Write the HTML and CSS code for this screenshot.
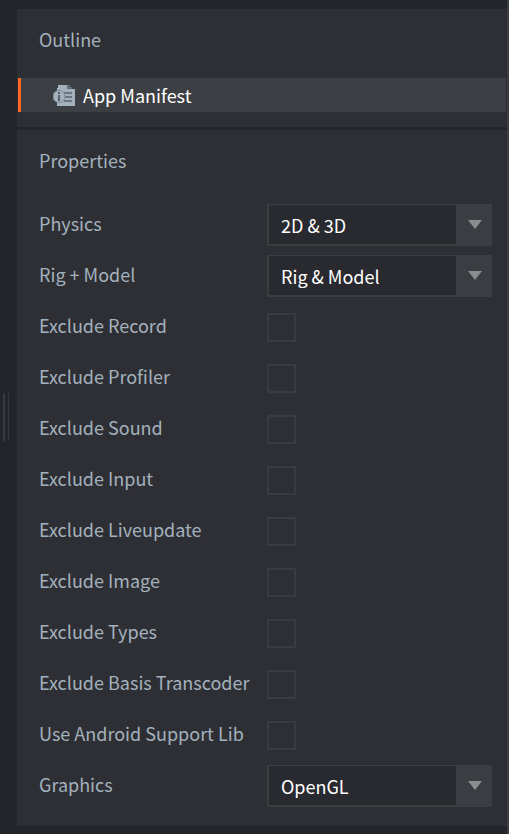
FILE: index.html
```html
<!DOCTYPE html>
<html lang="en">
<head>
<meta charset="utf-8">
<title>App Manifest</title>
<link rel="stylesheet" href="styles.css">
</head>
<body>
<div class="app">
  <div class="splitter"></div>
  <main class="side">
    <section class="panel outline">
      <h2 class="title">Outline</h2>
      <ul class="tree">
        <li class="item">
          <svg class="item-icon" viewBox="0 0 22 22" aria-hidden="true">
            <path class="ink" d="M5 1h9v4h8v17H4V4h1z"/>
            <path class="ink faint" d="M14 1h3v2h2v2h-5z"/>
            <path class="rule" d="M11 9h8M12 13h7M11 17h8"/>
            <circle class="disc" cx="6" cy="12.500" r="6"/>
            <path class="rule info" d="M6 8v2M5 12h1v5"/>
          </svg>
          <span>App Manifest</span>
        </li>
      </ul>
    </section>
    <section class="panel properties">
      <h2 class="title">Properties</h2>
      <form class="form">
        <label for="physics">Physics</label>
        <div class="select"><select id="physics"><option>2D &amp; 3D</option></select></div>
        <label for="rig">Rig + Model</label>
        <div class="select"><select id="rig"><option>Rig &amp; Model</option></select></div>
        <label for="record">Exclude Record</label>
        <input type="checkbox" id="record">
        <label for="profiler">Exclude Profiler</label>
        <input type="checkbox" id="profiler">
        <label for="sound">Exclude Sound</label>
        <input type="checkbox" id="sound">
        <label for="input">Exclude Input</label>
        <input type="checkbox" id="input">
        <label for="liveupdate">Exclude Liveupdate</label>
        <input type="checkbox" id="liveupdate">
        <label for="image">Exclude Image</label>
        <input type="checkbox" id="image">
        <label for="types">Exclude Types</label>
        <input type="checkbox" id="types">
        <label for="basis">Exclude Basis Transcoder</label>
        <input type="checkbox" id="basis">
        <label for="android">Use Android Support Lib</label>
        <input type="checkbox" id="android">
        <label for="graphics">Graphics</label>
        <div class="select"><select id="graphics"><option>OpenGL</option></select></div>
      </form>
    </section>
  </main>
</div>
</body>
</html>
```
FILE: styles.css
```css
* { box-sizing: border-box; }

body {
  margin: 0;
  background: #222529;
  color: #a3b1bd;
  font: 18px/28px "Noto Sans CJK SC", sans-serif;
}

.app {
  display: flex;
  min-height: 100vh;
  border-right: 2px solid #3a3c40;
}

.splitter {
  flex: none;
  align-self: center;
  width: 6px;
  height: 48px;
  margin: 0 8px 0 3px;
  border: solid #36393d;
  border-width: 0 1px 0 2px;
}

.side {
  flex: 1;
  display: flex;
  flex-direction: column;
  gap: 3px;
  padding: 9px 0 8px;
}

.panel { background: #2e2f34; }

.title {
  margin: 0;
  padding: 16px 22px 0;
  font-size: inherit;
  font-weight: 400;
}

.tree {
  margin: 25px 1px 15px;
  padding: 0;
  list-style: none;
}

.item {
  display: flex;
  align-items: center;
  gap: 8px;
  height: 34px;
  padding-left: 32px;
  border-left: 3px solid #fd6623;
  background: #3c3f43;
  color: #fff;
}

.item-icon { width: 22px; height: 22px; }
.ink { fill: #a3b1bd; }
.faint { opacity: 0.4; }
.disc { fill: #a3b1bd; stroke: #7f8a94; }
.rule { fill: none; stroke: #59626a; stroke-width: 1.5; }
.info { stroke-width: 2; }

.form {
  display: grid;
  grid-template-columns: 228px 1fr;
  grid-auto-rows: 42px;
  row-gap: 9px;
  align-items: center;
  padding: 30px 15px 19px 22px;
}

.form label { padding-bottom: 4px; }

.select {
  position: relative;
  height: 42px;
}

.select select {
  appearance: none;
  width: 100%;
  height: 100%;
  margin: 0;
  padding: 1px 48px 0 12px;
  border: 2px solid #3b3d41;
  border-top-width: 1px;
  border-radius: 0;
  background: #292a2f;
  color: #fff;
  font: inherit;
}

.select::after {
  content: "";
  position: absolute;
  inset: 0 0 0 auto;
  width: 36px;
  background: #3a3d41;
  pointer-events: none;
}

.select::before {
  content: "";
  position: absolute;
  z-index: 1;
  top: 16px;
  right: 10px;
  border: 7px solid transparent;
  border-top: 9px solid #8b8c8d;
  border-bottom: 0;
  pointer-events: none;
}

input[type="checkbox"] {
  appearance: none;
  width: 29px;
  height: 29px;
  margin: 0;
  border: 2px solid #3a3b40;
}

input[type="checkbox"]:checked { background: #a3b1bd; }
```
